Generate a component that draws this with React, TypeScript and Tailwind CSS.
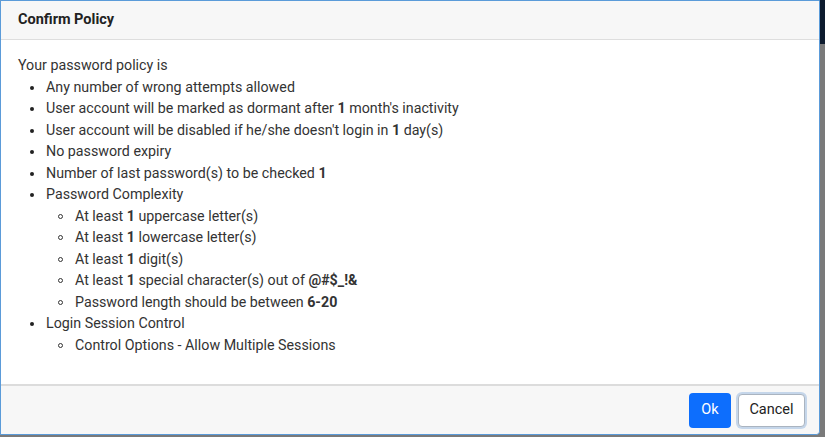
import React from "react";

const Bullet = ({ children }: { children: React.ReactNode }) => (
  <li className="flex items-start">
    <span className="w-[28px] shrink-0 flex justify-center pt-[9px]">
      <span className="block w-[4px] h-[4px] rounded-full bg-[#222]" />
    </span>
    <span>{children}</span>
  </li>
);

const Circle = ({ children }: { children: React.ReactNode }) => (
  <li className="flex items-start">
    <span className="w-[29px] shrink-0 flex justify-center pt-[8px]">
      <span className="block w-[5px] h-[5px] rounded-full border border-[#333]" />
    </span>
    <span>{children}</span>
  </li>
);

export default function App() {
  return (
    <div className="w-[825px] h-[437px] bg-[#7a7a7a] flex flex-col relative overflow-hidden" style={{ fontFamily: "Roboto, 'Liberation Sans', sans-serif" }}>
      <div className="absolute right-0 top-0 w-[8px] h-[44px] bg-[#0d1b2e]" />
      <div className="relative w-[820px] h-[435px] bg-white border border-[#5b9bd9] rounded-br-[4px] flex flex-col">
        <div className="h-[39px] bg-[#f7f7f7] border-b border-[#dedede] flex items-center pl-[17px]">
          <span className="text-[14.5px] font-bold text-[#222]">Confirm Policy</span>
        </div>
        <div className="flex-1 pl-[17px] pt-[15px] text-[14.25px] leading-[21.5px] text-[#333]">
          <div>Your password policy is</div>
          <ul>
            <Bullet>Any number of wrong attempts allowed</Bullet>
            <Bullet>User account will be marked as dormant after <b>1</b> month's inactivity</Bullet>
            <Bullet>User account will be disabled if he/she doesn't login in <b>1</b> day(s)</Bullet>
            <Bullet>No password expiry</Bullet>
            <Bullet>Number of last password(s) to be checked <b>1</b></Bullet>
            <Bullet>Password Complexity</Bullet>
            <li>
              <ul className="pl-[28px]">
                <Circle>At least <b>1</b> uppercase letter(s)</Circle>
                <Circle>At least <b>1</b> lowercase letter(s)</Circle>
                <Circle>At least <b>1</b> digit(s)</Circle>
                <Circle>At least <b>1</b> special character(s) out of <b>@#$_!&amp;</b></Circle>
                <Circle>Password length should be between <b>6-20</b></Circle>
              </ul>
            </li>
            <Bullet>Login Session Control</Bullet>
            <li>
              <ul className="pl-[28px]">
                <Circle>Control Options - Allow Multiple Sessions</Circle>
              </ul>
            </li>
          </ul>
        </div>
        <div className="h-[50px] bg-[#f7f7f7] border-t-[2px] border-[#dcdcdc] flex items-center justify-end gap-[7px] pr-[14px] rounded-br-[4px]">
          <button className="h-[35px] w-[42px] rounded-[4px] bg-[#0d6efd] text-white text-[14.5px]">Ok</button>
          <button className="h-[33px] w-[67px] rounded-[4px] bg-white border border-[#aab4c0] shadow-[0_0_0_2px_#c5d6ea] text-[#222] text-[14.5px]">Cancel</button>
        </div>
      </div>
    </div>
  );
}
